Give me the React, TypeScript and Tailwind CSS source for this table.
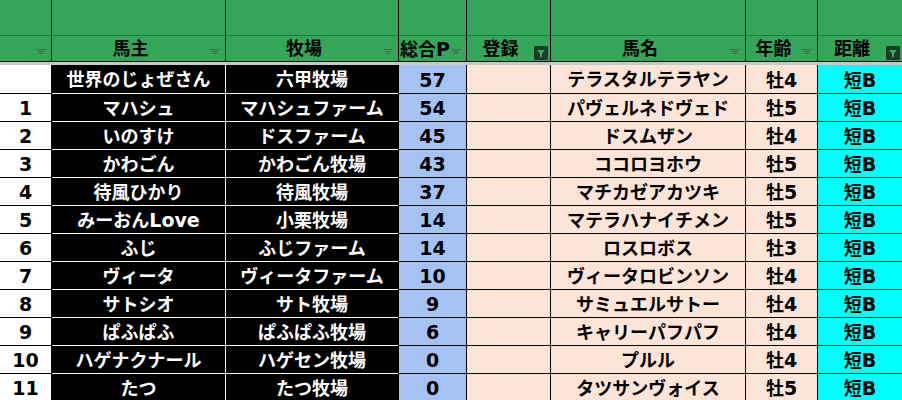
import React from "react";

const rows: [string, string, string, string, string, string, string, string][] = [
  ["", "世界のじょぜさん", "六甲牧場", "57", "", "テラスタルテラヤン", "牡4", "短B"],
  ["1", "マハシュ", "マハシュファーム", "54", "", "パヴェルネドヴェド", "牡5", "短B"],
  ["2", "いのすけ", "ドスファーム", "45", "", "ドスムザン", "牡4", "短B"],
  ["3", "かわごん", "かわごん牧場", "43", "", "ココロヨホウ", "牡5", "短B"],
  ["4", "待風ひかり", "待風牧場", "37", "", "マチカゼアカツキ", "牡5", "短B"],
  ["5", "みーおんLove", "小栗牧場", "14", "", "マテラハナイチメン", "牡5", "短B"],
  ["6", "ふじ", "ふじファーム", "14", "", "ロスロボス", "牡3", "短B"],
  ["7", "ヴィータ", "ヴィータファーム", "10", "", "ヴィータロビンソン", "牡4", "短B"],
  ["8", "サトシオ", "サト牧場", "9", "", "サミュエルサトー", "牡4", "短B"],
  ["9", "ぱふぱふ", "ぱふぱふ牧場", "6", "", "キャリーパフパフ", "牡4", "短B"],
  ["10", "ハゲナクナール", "ハゲセン牧場", "0", "", "プルル", "牡4", "短B"],
  ["11", "たつ", "たつ牧場", "0", "", "タツサンヴォイス", "牡5", "短B"],
];

const headers = ["", "馬主", "牧場", "総合P", "登録", "馬名", "年齢", "距離"];
const active = [false, false, false, false, true, false, false, true];

function Txt({ s }: { s: string }) {
  const parts = s.split(/([A-Za-z0-9]+)/).filter((p) => p !== "");
  return (
    <span className="inline-flex items-baseline">
      {parts.map((p, i) =>
        /^[A-Za-z0-9]+$/.test(p) ? (
          <span key={i} className="text-[19px]">
            {p}
          </span>
        ) : (
          <span key={i}>{p}</span>
        )
      )}
    </span>
  );
}

function SmallFilter() {
  return (
    <svg
      width="10"
      height="7"
      viewBox="0 0 10 7"
      className="absolute right-[5px] bottom-[5px]"
    >
      <rect x="0" y="0" width="10" height="1" fill="#3f6b4b" />
      <rect x="2" y="2" width="6" height="1" fill="#3f6b4b" />
      <rect x="3" y="4" width="4" height="1" fill="#3f6b4b" />
    </svg>
  );
}

function ActiveFilter() {
  return (
    <div className="absolute right-[2px] bottom-[1px] w-[14px] h-[14px] bg-[#1d3b27] rounded-[1px] flex items-center justify-center">
      <svg width="10" height="10" viewBox="0 0 10 10">
        <path d="M1 2 H9 L6 5.5 V9 H4 V5.5 Z" fill="#3da860" />
      </svg>
    </div>
  );
}

const cellBg = [
  "bg-white text-black border-r-black border-b-black",
  "bg-black text-white border-r-white border-b-white",
  "bg-black text-white border-r-black border-b-white",
  "bg-[#a4c2f4] text-black border-r-black border-b-black",
  "bg-[#fce4d6] text-black border-r-black border-b-black",
  "bg-[#fce4d6] text-black border-r-black border-b-black",
  "bg-[#fce4d6] text-black border-r-black border-b-black",
  "bg-[#00ffff] text-black border-r-black border-b-black",
];

export default function App() {
  return (
    <div
      className="w-[902px] h-[400px] overflow-hidden bg-white font-bold text-[18px] leading-none"
      style={{ fontFamily: '"DejaVu Sans", "Noto Sans CJK JP", sans-serif' }}
    >
      <div className="grid grid-cols-[52px_174px_173px_68px_84px_195px_72px_84px]">
        {headers.map((_, i) => (
          <div
            key={"h1" + i}
            className={`h-[36px] bg-[#34a65a] border-b border-b-[#1f7a3c] ${i < 7 ? "border-r border-r-black" : ""}`}
          />
        ))}
        {headers.map((h, i) => (
          <div
            key={"h2" + i}
            className={`relative h-[26px] bg-[#34a65a] border-b border-b-black text-black flex items-center pt-[1px] ${
              i === 3 ? "justify-start pl-[1px]" : "justify-center pr-[16px]"
            } ${i < 7 ? "border-r border-r-black" : ""}`}
          >
            <Txt s={h} />
            {active[i] ? <ActiveFilter /> : <SmallFilter />}
          </div>
        ))}
        <div className="col-span-8 h-[3px] bg-[#c8c8c8]" />
        {rows.map((r, ri) =>
          r.map((c, ci) => (
            <div
              key={ri + "-" + ci}
              className={`${ri === 0 ? "h-[29px]" : "h-[28px]"} flex items-center justify-center border-b pt-[2px] ${
                ci < 7 ? "border-r" : ""
              } ${cellBg[ci]}`}
            >
              <Txt s={c} />
            </div>
          ))
        )}
      </div>
    </div>
  );
}
